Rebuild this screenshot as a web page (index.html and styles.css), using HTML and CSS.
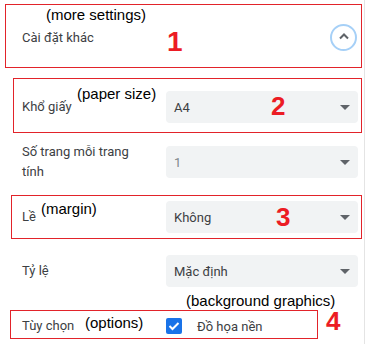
FILE: index.html
```html
<!DOCTYPE html>
<html lang="vi">
<head>
    <meta charset="UTF-8">
    <meta name="viewport" content="width=device-width, initial-scale=1.0">
    <title>Cài đặt khác</title>
    <link rel="stylesheet" href="styles.css">
</head>
<body>
<div class="page">

    <div class="header">
        <span class="title">Cài đặt khác</span>
        <button class="toggle" aria-label="Thu gọn">
            <svg width="12" height="8" viewBox="0 0 12 8">
                <polyline points="2,6.5 6,2.5 10,6.5" fill="none" stroke="#5f6368" stroke-width="2"/>
            </svg>
        </button>
    </div>

    <div class="settings">
        <div class="row">
            <span class="label">Khổ giấy</span>
            <div class="select">A4<span class="arrow"></span></div>
        </div>
        <div class="row">
            <span class="label">Số trang mỗi trang tính</span>
            <div class="select muted">1<span class="arrow"></span></div>
        </div>
        <div class="row">
            <span class="label">Lề</span>
            <div class="select">Không<span class="arrow"></span></div>
        </div>
        <div class="row row-last">
            <span class="label">Tỷ lệ</span>
            <div class="select">Mặc định<span class="arrow"></span></div>
        </div>
        <div class="row">
            <span class="label">Tùy chọn</span>
            <label class="check">
                <span class="box">
                    <svg width="12" height="10" viewBox="0 0 12 10">
                        <polyline points="1.5,5 4.5,8 10.5,2" fill="none" stroke="#fff" stroke-width="2"/>
                    </svg>
                </span>
                Đồ họa nền
            </label>
        </div>
    </div>

    <!-- annotations drawn over the screenshot -->
    <div class="mark mark-1"></div>
    <div class="mark mark-2"></div>
    <div class="mark mark-3"></div>
    <div class="mark mark-4"></div>

    <span class="note note-more">(more settings)</span>
    <span class="note note-paper">(paper size)</span>
    <span class="note note-margin">(margin)</span>
    <span class="note note-bg">(background graphics)</span>
    <span class="note note-options">(options)</span>

    <span class="num num-1">1</span>
    <span class="num num-2">2</span>
    <span class="num num-3">3</span>
    <span class="num num-4">4</span>

</div>
</body>
</html>
```

FILE: styles.css
```css
* {
    margin: 0;
    padding: 0;
    box-sizing: border-box;
}
body {
    font-family: Roboto, 'Liberation Sans', sans-serif;
    font-size: 13px;
    color: #3c4043;
    background: white;
}
.page {
    position: relative;
    width: 365px;
    height: 344px;
    border-right: 1px solid #e4e4e4;
}
.header {
    height: 74px;
    display: flex;
    align-items: center;
    justify-content: space-between;
    padding: 0 7px 0 22px;
}
.title {
    color: #3c4043;
}
.toggle {
    width: 27px;
    height: 27px;
    border-radius: 50%;
    border: 2px solid #a6d0f7;
    background: white;
    display: flex;
    align-items: center;
    justify-content: center;
    padding-bottom: 2px;
}
.toggle svg {
    display: block;
}
.settings {
    display: flex;
    flex-direction: column;
    gap: 23px;
    padding: 17px 0 0 22px;
}
.row {
    display: flex;
    align-items: center;
    height: 32px;
}
.row-last {
    margin-top: -1px;
}
.label {
    width: 144px;
    padding-right: 24px;
    line-height: 20px;
    flex-shrink: 0;
}
.select {
    width: 192px;
    height: 32px;
    background-color: #f1f3f4;
    border-radius: 4px;
    display: flex;
    align-items: center;
    justify-content: space-between;
    padding: 0 8px;
    color: #3c4043;
}
.select.muted {
    color: #80868b;
}
.arrow {
    width: 0;
    height: 0;
    border-left: 5px solid transparent;
    border-right: 5px solid transparent;
    border-top: 5px solid #5f6368;
}
.check {
    display: flex;
    align-items: center;
    gap: 15px;
}
.box {
    width: 16px;
    height: 16px;
    border-radius: 2px;
    background-color: #1a73e8;
    display: flex;
    align-items: center;
    justify-content: center;
}
.box svg {
    display: block;
}

/* red boxes, notes and numbers */
.mark {
    position: absolute;
    border: 1px solid #e2232a;
}
.mark-1 { left: 5px; top: 4px; width: 357px; height: 64px; }
.mark-2 { left: 13px; top: 78px; width: 349px; height: 55px; }
.mark-3 { left: 11px; top: 195px; width: 351px; height: 44px; }
.mark-4 { left: 10px; top: 310px; width: 308px; height: 29px; }

.note {
    position: absolute;
    font-family: 'Liberation Sans', Arial, sans-serif;
    font-size: 15px;
    line-height: 1;
    color: #000;
    white-space: nowrap;
}
.note-more { left: 46px; top: 7px; }
.note-paper { left: 77px; top: 86px; }
.note-margin { left: 41px; top: 201px; }
.note-bg { left: 186px; top: 293px; }
.note-options { left: 85px; top: 315px; }

.num {
    position: absolute;
    font-family: 'Liberation Sans', Arial, sans-serif;
    font-weight: bold;
    font-size: 26px;
    line-height: 1;
    color: #ec1c24;
}
.num-1 { left: 167px; top: 28px; font-size: 28px; }
.num-2 { left: 271px; top: 93px; }
.num-3 { left: 276px; top: 204px; }
.num-4 { left: 326px; top: 308px; }
```
